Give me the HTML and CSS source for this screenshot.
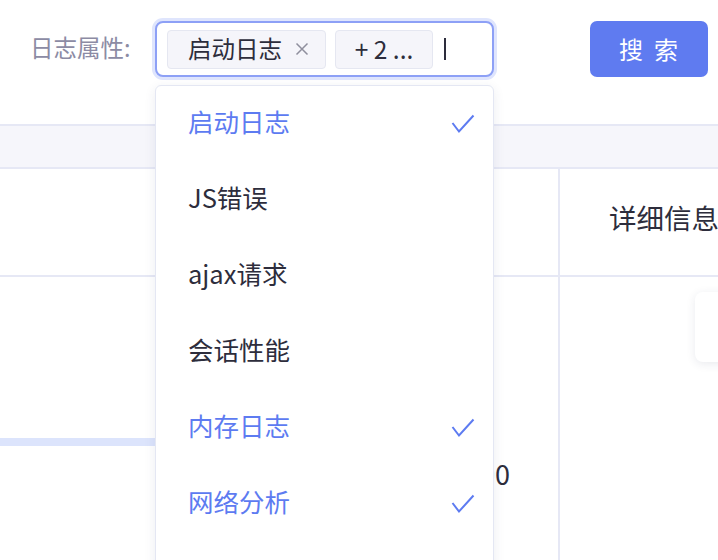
FILE: index.html
```html
<!DOCTYPE html>
<html lang="zh-CN">
<head>
<meta charset="utf-8">
<title>日志查询</title>
<link rel="stylesheet" href="styles.css">
</head>
<body>
<div class="page">
  <div class="toolbar">
    <label class="field-label">日志属性:</label>
    <div class="select">
      <span class="tag tag-first">启动日志<svg class="tag-close" width="14" height="14" viewBox="0 0 14 14"><path d="M1.5 1.5 L12.5 12.5 M12.5 1.5 L1.5 12.5" stroke="#8f8f9d" stroke-width="1.5" fill="none"/></svg></span>
      <span class="tag tag-more">+ 2 ...</span>
      <span class="caret"></span>
    </div>
    <button class="btn">搜索</button>
  </div>

  <div class="table">
    <div class="thead"></div>
    <div class="row row-head">
      <div class="cell cell-main"></div>
      <div class="cell cell-side"><span class="head-text">详细信息</span></div>
    </div>
    <div class="row row-body">
      <div class="cell cell-main">
        <div class="progress"></div>
        <div class="value">1200</div>
      </div>
      <div class="cell cell-side">
        <div class="card"></div>
      </div>
    </div>
  </div>

  <ul class="dropdown">
    <li class="option selected">启动日志<svg class="check" width="24" height="20" viewBox="0 0 24 20"><path d="M1.5 9 L8 17.5 L22.5 1.5" stroke="#5d7bf1" stroke-width="2" fill="none"/></svg></li>
    <li class="option">JS错误</li>
    <li class="option">ajax请求</li>
    <li class="option">会话性能</li>
    <li class="option selected">内存日志<svg class="check" width="24" height="20" viewBox="0 0 24 20"><path d="M1.5 9 L8 17.5 L22.5 1.5" stroke="#5d7bf1" stroke-width="2" fill="none"/></svg></li>
    <li class="option selected">网络分析<svg class="check" width="24" height="20" viewBox="0 0 24 20"><path d="M1.5 9 L8 17.5 L22.5 1.5" stroke="#5d7bf1" stroke-width="2" fill="none"/></svg></li>
    <li class="option"></li>
  </ul>
</div>
</body>
</html>
```

FILE: styles.css
```css
html, body {
  margin: 0;
  padding: 0;
  background: #ffffff;
}

body {
  font-family: "Noto Sans CJK SC", "Noto Sans", sans-serif;
  color: #2d2d3c;
}

.page {
  position: relative;
  width: 718px;
  height: 560px;
  overflow: hidden;
}

/* toolbar */
.toolbar {
  display: flex;
  align-items: center;
  height: 98px;
  padding-left: 30px;
  margin-bottom: 26px;
}

.field-label {
  flex: 0 0 125px;
  font-size: 23.5px;
  color: #8c8ba4;
  line-height: 30px;
  padding-bottom: 5px;
}

.select {
  box-sizing: border-box;
  flex: 0 0 339px;
  height: 56px;
  display: flex;
  align-items: center;
  gap: 9px;
  padding-left: 10px;
  border: 2px solid #8da0f6;
  border-radius: 8px;
  box-shadow: 0 0 0 3px #dfe5fd;
  background: #fff;
}

.tag {
  box-sizing: border-box;
  height: 39px;
  display: flex;
  align-items: center;
  background: #f5f5fa;
  border: 1px solid #e5e7f1;
  border-radius: 4px;
  font-size: 23.5px;
  color: #2d2d3c;
  line-height: 1;
}

.tag-first {
  width: 159px;
  padding-left: 20px;
}

.tag-close {
  margin-left: 13px;
}

.tag-more {
  width: 98px;
  justify-content: center;
  font-size: 24.5px;
}

.caret {
  width: 2px;
  height: 22px;
  background: #2d2d3c;
  margin-left: 2px;
}

.btn {
  margin-left: 96px;
  width: 118px;
  height: 56px;
  border: none;
  border-radius: 7px;
  background: #5f7bf0;
  color: #ffffff;
  font-family: "Noto Sans CJK SC", sans-serif;
  font-size: 24px;
  letter-spacing: 11px;
  text-indent: 10px;
  padding: 0 0 2px;
}

/* table */
.table {
  width: 718px;
}

.thead {
  height: 41px;
  background: #f6f6fb;
  border-top: 2px solid #e6e8f5;
  border-bottom: 2px solid #e6e8f5;
}

.row {
  display: flex;
  border-bottom: 2px solid #e6e8f5;
}

.row-head {
  height: 106px;
}

.row-body {
  height: 400px;
}

.cell-main {
  flex: 0 0 558px;
  border-right: 2px solid #e6e8f5;
}

.cell-side {
  flex: 1 1 auto;
}

.row-head .cell-side {
  display: flex;
  align-items: center;
  padding-left: 49px;
  padding-bottom: 10px;
}

.head-text {
  font-size: 27.5px;
  color: #2d2d3c;
  white-space: nowrap;
}

.progress {
  margin-top: 161px;
  height: 8px;
  width: 480px;
  background: #dce4fc;
}

.value {
  margin-top: 14px;
  padding-right: 48px;
  text-align: right;
  font-size: 27px;
  line-height: 28px;
  color: #2d2d3c;
}

.card {
  margin-top: 15px;
  margin-left: 135px;
  width: 80px;
  height: 70px;
  border-radius: 8px;
  background: #fff;
  box-shadow: 0 2px 10px rgba(40, 50, 90, 0.10);
}

/* dropdown */
.dropdown {
  position: absolute;
  left: 155px;
  top: 85px;
  width: 339px;
  height: 520px;
  box-sizing: border-box;
  margin: 0;
  padding: 0;
  list-style: none;
  background: #fff;
  border: 1px solid #e4e7f3;
  border-radius: 6px;
  box-shadow: 0 3px 12px rgba(40, 50, 100, 0.09);
}

.option {
  box-sizing: border-box;
  height: 76px;
  display: flex;
  align-items: center;
  justify-content: space-between;
  padding: 0 18px 8px 32px;
  font-size: 25.5px;
  color: #2d2d3c;
}

.option.selected {
  color: #5d7bf1;
}

.check {
  display: block;
  margin-top: 8px;
}
```
